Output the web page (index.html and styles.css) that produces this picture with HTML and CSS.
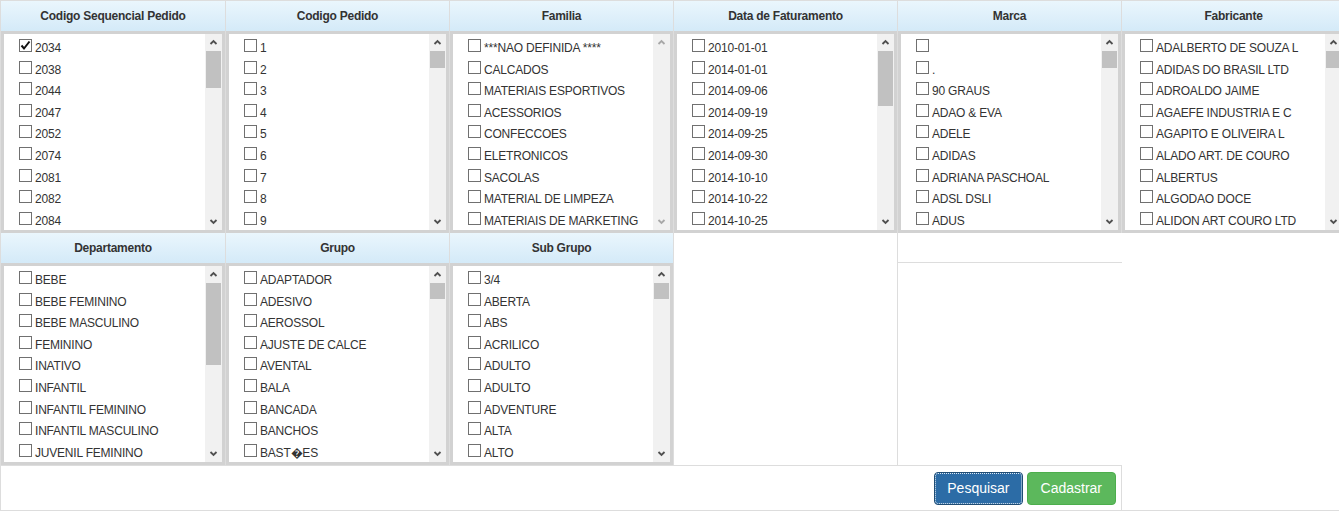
FILE: index.html
```html
<!DOCTYPE html>
<html lang="pt-BR">
<head>
<meta charset="utf-8">
<title>Filtros de Pedidos</title>
<link rel="stylesheet" href="styles.css">
</head>
<body>
<div class="filters">

  <!-- Row 1 -->
  <div class="filter">
    <div class="filter-head">Codigo Sequencial Pedido</div>
    <div class="listbox">
      <ul class="opts">
        <li class="opt"><span class="cb"><svg viewBox="0 0 11 11" class="tick"><polyline points="1.5,5.5 4,8.5 9.5,1.5"/></svg></span>2034</li>
        <li class="opt"><span class="cb"></span>2038</li>
        <li class="opt"><span class="cb"></span>2044</li>
        <li class="opt"><span class="cb"></span>2047</li>
        <li class="opt"><span class="cb"></span>2052</li>
        <li class="opt"><span class="cb"></span>2074</li>
        <li class="opt"><span class="cb"></span>2081</li>
        <li class="opt"><span class="cb"></span>2082</li>
        <li class="opt"><span class="cb"></span>2084</li>
      </ul>
      <div class="sbar">
        <span class="sb-btn"><svg viewBox="0 0 17 17"><polyline points="5.5,10 8.5,7 11.5,10"/></svg></span>
        <span class="sb-thumb" style="height:37px"></span>
        <span class="sb-track"></span>
        <span class="sb-btn"><svg viewBox="0 0 17 17"><polyline points="5.5,7 8.5,10 11.5,7"/></svg></span>
      </div>
    </div>
  </div>

  <div class="filter">
    <div class="filter-head">Codigo Pedido</div>
    <div class="listbox">
      <ul class="opts">
        <li class="opt"><span class="cb"></span>1</li>
        <li class="opt"><span class="cb"></span>2</li>
        <li class="opt"><span class="cb"></span>3</li>
        <li class="opt"><span class="cb"></span>4</li>
        <li class="opt"><span class="cb"></span>5</li>
        <li class="opt"><span class="cb"></span>6</li>
        <li class="opt"><span class="cb"></span>7</li>
        <li class="opt"><span class="cb"></span>8</li>
        <li class="opt"><span class="cb"></span>9</li>
      </ul>
      <div class="sbar">
        <span class="sb-btn"><svg viewBox="0 0 17 17"><polyline points="5.5,10 8.5,7 11.5,10"/></svg></span>
        <span class="sb-thumb" style="height:17px"></span>
        <span class="sb-track"></span>
        <span class="sb-btn"><svg viewBox="0 0 17 17"><polyline points="5.5,7 8.5,10 11.5,7"/></svg></span>
      </div>
    </div>
  </div>

  <div class="filter">
    <div class="filter-head">Familia</div>
    <div class="listbox">
      <ul class="opts">
        <li class="opt"><span class="cb"></span>***NAO DEFINIDA ****</li>
        <li class="opt"><span class="cb"></span>CALCADOS</li>
        <li class="opt"><span class="cb"></span>MATERIAIS ESPORTIVOS</li>
        <li class="opt"><span class="cb"></span>ACESSORIOS</li>
        <li class="opt"><span class="cb"></span>CONFECCOES</li>
        <li class="opt"><span class="cb"></span>ELETRONICOS</li>
        <li class="opt"><span class="cb"></span>SACOLAS</li>
        <li class="opt"><span class="cb"></span>MATERIAL DE LIMPEZA</li>
        <li class="opt"><span class="cb"></span>MATERIAIS DE MARKETING</li>
      </ul>
      <div class="sbar sbar-idle">
        <span class="sb-btn"><svg viewBox="0 0 17 17"><polyline points="5.5,10 8.5,7 11.5,10"/></svg></span>
        <span class="sb-track"></span>
        <span class="sb-btn"><svg viewBox="0 0 17 17"><polyline points="5.5,7 8.5,10 11.5,7"/></svg></span>
      </div>
    </div>
  </div>

  <div class="filter">
    <div class="filter-head">Data de Faturamento</div>
    <div class="listbox">
      <ul class="opts">
        <li class="opt"><span class="cb"></span>2010-01-01</li>
        <li class="opt"><span class="cb"></span>2014-01-01</li>
        <li class="opt"><span class="cb"></span>2014-09-06</li>
        <li class="opt"><span class="cb"></span>2014-09-19</li>
        <li class="opt"><span class="cb"></span>2014-09-25</li>
        <li class="opt"><span class="cb"></span>2014-09-30</li>
        <li class="opt"><span class="cb"></span>2014-10-10</li>
        <li class="opt"><span class="cb"></span>2014-10-22</li>
        <li class="opt"><span class="cb"></span>2014-10-25</li>
      </ul>
      <div class="sbar">
        <span class="sb-btn"><svg viewBox="0 0 17 17"><polyline points="5.5,10 8.5,7 11.5,10"/></svg></span>
        <span class="sb-thumb" style="height:55px"></span>
        <span class="sb-track"></span>
        <span class="sb-btn"><svg viewBox="0 0 17 17"><polyline points="5.5,7 8.5,10 11.5,7"/></svg></span>
      </div>
    </div>
  </div>

  <div class="filter">
    <div class="filter-head">Marca</div>
    <div class="listbox">
      <ul class="opts">
        <li class="opt"><span class="cb"></span></li>
        <li class="opt"><span class="cb"></span>.</li>
        <li class="opt"><span class="cb"></span>90 GRAUS</li>
        <li class="opt"><span class="cb"></span>ADAO &amp; EVA</li>
        <li class="opt"><span class="cb"></span>ADELE</li>
        <li class="opt"><span class="cb"></span>ADIDAS</li>
        <li class="opt"><span class="cb"></span>ADRIANA PASCHOAL</li>
        <li class="opt"><span class="cb"></span>ADSL DSLI</li>
        <li class="opt"><span class="cb"></span>ADUS</li>
      </ul>
      <div class="sbar">
        <span class="sb-btn"><svg viewBox="0 0 17 17"><polyline points="5.5,10 8.5,7 11.5,10"/></svg></span>
        <span class="sb-thumb" style="height:17px"></span>
        <span class="sb-track"></span>
        <span class="sb-btn"><svg viewBox="0 0 17 17"><polyline points="5.5,7 8.5,10 11.5,7"/></svg></span>
      </div>
    </div>
  </div>

  <div class="filter">
    <div class="filter-head">Fabricante</div>
    <div class="listbox">
      <ul class="opts">
        <li class="opt"><span class="cb"></span>ADALBERTO DE SOUZA L</li>
        <li class="opt"><span class="cb"></span>ADIDAS DO BRASIL LTD</li>
        <li class="opt"><span class="cb"></span>ADROALDO JAIME</li>
        <li class="opt"><span class="cb"></span>AGAEFE INDUSTRIA E C</li>
        <li class="opt"><span class="cb"></span>AGAPITO E OLIVEIRA L</li>
        <li class="opt"><span class="cb"></span>ALADO ART. DE COURO</li>
        <li class="opt"><span class="cb"></span>ALBERTUS</li>
        <li class="opt"><span class="cb"></span>ALGODAO DOCE</li>
        <li class="opt"><span class="cb"></span>ALIDON ART COURO LTD</li>
      </ul>
      <div class="sbar">
        <span class="sb-btn"><svg viewBox="0 0 17 17"><polyline points="5.5,10 8.5,7 11.5,10"/></svg></span>
        <span class="sb-thumb" style="height:17px"></span>
        <span class="sb-track"></span>
        <span class="sb-btn"><svg viewBox="0 0 17 17"><polyline points="5.5,7 8.5,10 11.5,7"/></svg></span>
      </div>
    </div>
  </div>

  <!-- Row 2 -->
  <div class="filter">
    <div class="filter-head">Departamento</div>
    <div class="listbox">
      <ul class="opts">
        <li class="opt"><span class="cb"></span>BEBE</li>
        <li class="opt"><span class="cb"></span>BEBE FEMININO</li>
        <li class="opt"><span class="cb"></span>BEBE MASCULINO</li>
        <li class="opt"><span class="cb"></span>FEMININO</li>
        <li class="opt"><span class="cb"></span>INATIVO</li>
        <li class="opt"><span class="cb"></span>INFANTIL</li>
        <li class="opt"><span class="cb"></span>INFANTIL FEMININO</li>
        <li class="opt"><span class="cb"></span>INFANTIL MASCULINO</li>
        <li class="opt"><span class="cb"></span>JUVENIL FEMININO</li>
      </ul>
      <div class="sbar">
        <span class="sb-btn"><svg viewBox="0 0 17 17"><polyline points="5.5,10 8.5,7 11.5,10"/></svg></span>
        <span class="sb-thumb" style="height:82px"></span>
        <span class="sb-track"></span>
        <span class="sb-btn"><svg viewBox="0 0 17 17"><polyline points="5.5,7 8.5,10 11.5,7"/></svg></span>
      </div>
    </div>
  </div>

  <div class="filter">
    <div class="filter-head">Grupo</div>
    <div class="listbox">
      <ul class="opts">
        <li class="opt"><span class="cb"></span>ADAPTADOR</li>
        <li class="opt"><span class="cb"></span>ADESIVO</li>
        <li class="opt"><span class="cb"></span>AEROSSOL</li>
        <li class="opt"><span class="cb"></span>AJUSTE DE CALCE</li>
        <li class="opt"><span class="cb"></span>AVENTAL</li>
        <li class="opt"><span class="cb"></span>BALA</li>
        <li class="opt"><span class="cb"></span>BANCADA</li>
        <li class="opt"><span class="cb"></span>BANCHOS</li>
        <li class="opt"><span class="cb"></span>BAST&#xFFFD;ES</li>
      </ul>
      <div class="sbar">
        <span class="sb-btn"><svg viewBox="0 0 17 17"><polyline points="5.5,10 8.5,7 11.5,10"/></svg></span>
        <span class="sb-thumb" style="height:16px"></span>
        <span class="sb-track"></span>
        <span class="sb-btn"><svg viewBox="0 0 17 17"><polyline points="5.5,7 8.5,10 11.5,7"/></svg></span>
      </div>
    </div>
  </div>

  <div class="filter">
    <div class="filter-head">Sub Grupo</div>
    <div class="listbox">
      <ul class="opts">
        <li class="opt"><span class="cb"></span>3/4</li>
        <li class="opt"><span class="cb"></span>ABERTA</li>
        <li class="opt"><span class="cb"></span>ABS</li>
        <li class="opt"><span class="cb"></span>ACRILICO</li>
        <li class="opt"><span class="cb"></span>ADULTO</li>
        <li class="opt"><span class="cb"></span>ADULTO</li>
        <li class="opt"><span class="cb"></span>ADVENTURE</li>
        <li class="opt"><span class="cb"></span>ALTA</li>
        <li class="opt"><span class="cb"></span>ALTO</li>
      </ul>
      <div class="sbar">
        <span class="sb-btn"><svg viewBox="0 0 17 17"><polyline points="5.5,10 8.5,7 11.5,10"/></svg></span>
        <span class="sb-thumb" style="height:16px"></span>
        <span class="sb-track"></span>
        <span class="sb-btn"><svg viewBox="0 0 17 17"><polyline points="5.5,7 8.5,10 11.5,7"/></svg></span>
      </div>
    </div>
  </div>

  <div class="cell-blank cell-ruled"></div>
  <div class="cell-blank"><div class="blank-head"></div></div>
  <div class="cell-blank cell-open"></div>

  <!-- Row 3 -->
  <div class="actions">
    <button type="button" class="btn btn-primary">Pesquisar</button>
    <button type="button" class="btn btn-success">Cadastrar</button>
  </div>
  <div class="cell-blank cell-open"></div>

</div>
</body>
</html>
```

FILE: styles.css
```css
html, body {
  margin: 0;
  padding: 0;
  background: #fff;
  overflow: hidden;
}

body {
  font-family: "Liberation Sans", Arial, sans-serif;
  font-size: 12px;
  color: #333;
}

.filters {
  display: grid;
  grid-template-columns: 225px repeat(5, 224px);
  grid-template-rows: 232px 232px 45px;
  width: max-content;
  border: 1px solid #ddd;
}

.filter {
  display: flex;
  flex-direction: column;
  border-right: 1px solid #ddd;
  min-width: 0;
}

.filter-head {
  height: 30px;
  line-height: 30px;
  text-align: center;
  font-weight: bold;
  font-size: 12px;
  letter-spacing: -0.25px;
  color: #333;
  background: linear-gradient(#eaf6fd, #d4eaf8);
  white-space: nowrap;
  overflow: hidden;
}

.listbox {
  flex: 1;
  display: flex;
  border: 3px solid #d2d2d2;
  background: #fff;
  min-height: 0;
}

.opts {
  flex: 1;
  margin: 0;
  padding: 4px 0 0;
  list-style: none;
  overflow: hidden;
  min-width: 0;
}

.opt {
  height: 21.6px;
  line-height: 21.6px;
  padding-left: 15px;
  white-space: nowrap;
  font-size: 12px;
  letter-spacing: -0.2px;
  color: #333;
}

.cb {
  display: inline-block;
  box-sizing: border-box;
  width: 13px;
  height: 13px;
  margin-right: 3px;
  border: 1px solid #707070;
  background: #fff;
  vertical-align: baseline;
}

.tick {
  display: block;
  width: 11px;
  height: 11px;
  fill: none;
  stroke: #111;
  stroke-width: 2;
}

.sbar {
  width: 17px;
  flex: none;
  display: flex;
  flex-direction: column;
  background: #f1f1f1;
}

.sb-btn {
  display: block;
  height: 17px;
  flex: none;
}

.sb-btn svg {
  display: block;
  width: 17px;
  height: 17px;
  fill: none;
  stroke: #505050;
  stroke-width: 1.8;
}

.sbar-idle .sb-btn svg {
  stroke: #a8a8a8;
}

.sb-thumb {
  display: block;
  flex: none;
  margin: 0 1px;
  background: #c1c1c1;
}

.sb-track {
  display: block;
  flex: 1;
}

.cell-blank {
  min-width: 0;
}

.cell-ruled {
  border-right: 1px solid #ddd;
}

.blank-head {
  height: 30px;
  box-sizing: border-box;
  border-bottom: 1px solid #ddd;
}

.actions {
  grid-column: 1 / 6;
  display: flex;
  justify-content: flex-end;
  align-items: flex-start;
  gap: 4px;
  padding: 6px 5px 0 0;
  border-top: 1px solid #ddd;
  border-right: 1px solid #ddd;
}

.btn {
  margin: 0;
  font-family: "Liberation Sans", Arial, sans-serif;
  font-size: 14px;
  line-height: 19px;
  padding: 6px 12px;
  border: 1px solid transparent;
  border-radius: 4px;
  color: #fff;
  cursor: pointer;
}

.btn-primary {
  background: #2c6ca6;
  border-color: #204d74;
  outline: 1px dotted #dfe9f3;
  outline-offset: -2px;
}

.btn-success {
  padding: 6px 13px;
  background: #5cb85c;
  border-color: #4cae4c;
}
```
